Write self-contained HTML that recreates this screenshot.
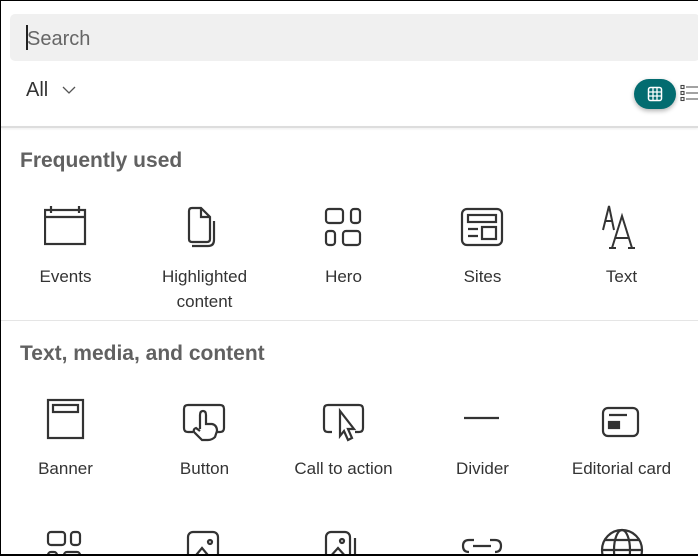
<!DOCTYPE html>
<html><head><style>
*{margin:0;padding:0;box-sizing:border-box}
body{width:698px;height:556px;overflow:hidden;background:#fff;font-family:"Liberation Sans",sans-serif;position:relative}
.frame{position:absolute;left:0;top:0;width:698px;height:556px;border:1px solid #000;border-right:none;border-bottom:2px solid #000;pointer-events:none}
.search{position:absolute;left:10px;top:14px;width:690px;height:47px;background:#f0f0f0;border-radius:5px}
.search span{position:absolute;left:17px;top:14px;font-size:20px;color:#666}
.caret{position:absolute;left:16px;top:11px;width:2px;height:25px;background:#222}
.all{position:absolute;left:26px;top:79px;font-size:20px;color:#333}
.tog{position:absolute;left:634px;top:79px;width:42px;height:30px;border-radius:15px;background:#036c70;box-shadow:0 2px 5px rgba(0,0,0,.3)}
.hr1{position:absolute;left:1px;top:126px;width:697px;height:2px;background:#ddd;box-shadow:0 1px 2px rgba(0,0,0,.08)}
.hr2{position:absolute;left:1px;top:320px;width:697px;height:1px;background:#e5e5e5}
h2{position:absolute;left:20px;font-size:21px;font-weight:bold;color:#616161}
.it{position:absolute;width:139px;text-align:center;font-size:17px;color:#333;line-height:25px}
svg.ic{position:absolute}
</style></head><body>
<div class="search"><span>Search</span><div class="caret"></div></div>
<div class="all">All</div>
<svg style="position:absolute;left:62px;top:85px" width="14" height="10"><path d="M1 2 L7 8 L13 2" fill="none" stroke="#555" stroke-width="1.3"/></svg>
<div class="tog"><svg style="position:absolute;left:13px;top:7px" width="16" height="16"><rect x="1.5" y="1.5" width="13" height="13" rx="2" fill="none" stroke="#fff" stroke-width="1.5"/><path d="M6 1.5V14.5M10 1.5V14.5M1.5 6H14.5M1.5 10H14.5" stroke="#fff" stroke-width="1.3"/></svg></div>
<svg style="position:absolute;left:680px;top:84px" width="18" height="18"><g fill="none" stroke="#444" stroke-width="1.1"><rect x="1" y="1.5" width="3" height="3"/><rect x="1" y="7.5" width="3" height="3"/><rect x="1" y="13.5" width="3" height="3"/><path d="M6 3H18M6 9H18M6 15H18"/></g></svg>
<div class="hr1"></div>
<h2 style="top:149px">Frequently used</h2>
<svg class="ic" style="left:44px;top:206px" width="44" height="42" fill="none" stroke="#333" stroke-width="2.2"><rect x="1" y="4" width="40" height="34"/><path d="M1 11H41M7 0V7M35 0V7"/></svg>
<svg class="ic" style="left:186px;top:206px" width="40" height="44" fill="none" stroke="#333" stroke-width="2.2"><path d="M6 2H15L24 11V33Q24 36 21 36H6Q3 36 3 33V5Q3 2 6 2Z"/><path d="M15 2V11H24"/><path d="M6 40H22Q28 40 28 34V15"/></svg>
<svg class="ic" style="left:324px;top:206px" width="40" height="42" fill="none" stroke="#333" stroke-width="2.2"><rect x="2" y="3" width="17" height="14" rx="3"/><rect x="27" y="3" width="9" height="14" rx="3"/><rect x="2" y="25" width="9" height="14" rx="3"/><rect x="19" y="25" width="17" height="14" rx="3"/></svg>
<svg class="ic" style="left:460px;top:207px" width="44" height="40" fill="none" stroke="#333" stroke-width="2.2"><rect x="2" y="2" width="40" height="36" rx="5"/><rect x="8" y="8" width="28" height="7"/><rect x="22" y="20" width="14" height="12"/><path d="M8 22H18M8 29H18"/></svg>
<svg class="ic" style="left:600px;top:204px" width="46" height="46" fill="none" stroke="#333" stroke-width="2"><path d="M3 26L9 2L14 26M5 17H13"/><path d="M12 44L22 12L32 44M15 34H29M9 44H16M28 44H35"/></svg>
<div class="it" style="left:-4px;top:264px">Events</div>
<div class="it" style="left:135px;top:264px">Highlighted<br>content</div>
<div class="it" style="left:274px;top:264px">Hero</div>
<div class="it" style="left:413px;top:264px">Sites</div>
<div class="it" style="left:552px;top:264px">Text</div>
<div class="hr2"></div>
<h2 style="top:342px">Text, media, and content</h2>
<svg class="ic" style="left:46px;top:398px" width="40" height="44" fill="none" stroke="#333" stroke-width="2.2"><rect x="2" y="2" width="35" height="38"/><rect x="7" y="7" width="25" height="7"/></svg>
<svg class="ic" style="left:182px;top:403px" width="46" height="40" fill="none" stroke="#333" stroke-width="2.2"><path d="M11 29H6Q2 29 2 25V6Q2 2 6 2H38Q42 2 42 6V25Q42 29 38 29H35"/><path d="M18 26V12Q18 8 21 8Q24 8 24 12V21L30 21Q35 22 35 28L33 34Q30 37 26 37H20L12 29Q11 26 14 25L18 28"/></svg>
<svg class="ic" style="left:322px;top:403px" width="46" height="40" fill="none" stroke="#333" stroke-width="2.2"><path d="M10 29H6Q2 29 2 25V6Q2 2 6 2H37Q41 2 41 6V25Q41 29 37 29H33"/><path d="M18 8V33L22 28L26 37L30 35L26 26H32Z"/></svg>
<svg class="ic" style="left:462px;top:414px" width="40" height="8"><path d="M2 4H37" stroke="#333" stroke-width="2.2"/></svg>
<svg class="ic" style="left:600px;top:406px" width="44" height="34" fill="none" stroke="#333" stroke-width="2.2"><rect x="3" y="2" width="35" height="28" rx="5"/><path d="M9 9H27"/><rect x="9" y="16" width="10" height="6" fill="#333"/></svg>
<div class="it" style="left:-4px;top:456px">Banner</div>
<div class="it" style="left:135px;top:456px">Button</div>
<div class="it" style="left:274px;top:456px">Call to action</div>
<div class="it" style="left:413px;top:456px">Divider</div>
<div class="it" style="left:552px;top:456px">Editorial card</div>
<svg class="ic" style="left:46px;top:530px" width="40" height="26" fill="none" stroke="#333" stroke-width="2.2"><rect x="2" y="2" width="17" height="13" rx="3"/><rect x="25" y="2" width="9" height="13" rx="3"/><rect x="2" y="22" width="9" height="13" rx="3"/><rect x="18" y="22" width="16" height="13" rx="3"/></svg>
<svg class="ic" style="left:186px;top:530px" width="36" height="26" fill="none" stroke="#333" stroke-width="2.2"><rect x="2" y="2" width="30" height="34" rx="5"/><circle cx="24" cy="12" r="2"/><path d="M6 30L16 18L26 30"/></svg>
<svg class="ic" style="left:324px;top:530px" width="40" height="26" fill="none" stroke="#333" stroke-width="2.2"><rect x="2" y="2" width="24" height="34" rx="5"/><circle cx="18" cy="11" r="2"/><path d="M5 28L14 18L23 28M31 8V36"/></svg>
<svg class="ic" style="left:460px;top:532px" width="44" height="24" fill="none" stroke="#333" stroke-width="2.2"><path d="M14 8H9Q3 8 3 14Q3 20 9 20M30 8H35Q41 8 41 14Q41 20 35 20M13 14H31"/></svg>
<svg class="ic" style="left:600px;top:528px" width="44" height="28" fill="none" stroke="#333" stroke-width="2.2"><circle cx="22" cy="22" r="20"/><ellipse cx="22" cy="22" rx="8" ry="20"/><path d="M2 22H42M5 12H39"/></svg>
<div class="frame"></div>
</body></html>
